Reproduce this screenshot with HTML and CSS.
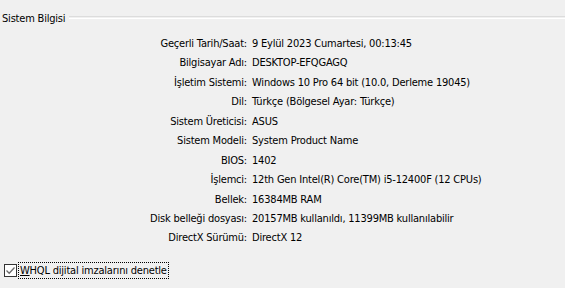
FILE: index.html
```html
<!DOCTYPE html>
<html lang="tr">
<head>
<meta charset="utf-8">
<link rel="stylesheet" href="styles.css">
</head>
<body>
<div class="panel">
  <div class="group-head">
    <span class="group-title">Sistem Bilgisi</span>
    <span class="group-line"></span>
  </div>
  <div class="info">
    <div class="lbl">Geçerli Tarih/Saat:</div><div class="val">9 Eylül 2023 Cumartesi, 00:13:45</div>
    <div class="lbl">Bilgisayar Adı:</div><div class="val">DESKTOP-EFQGAGQ</div>
    <div class="lbl">İşletim Sistemi:</div><div class="val">Windows 10 Pro 64 bit (10.0, Derleme 19045)</div>
    <div class="lbl">Dil:</div><div class="val">Türkçe (Bölgesel Ayar: Türkçe)</div>
    <div class="lbl">Sistem Üreticisi:</div><div class="val">ASUS</div>
    <div class="lbl">Sistem Modeli:</div><div class="val">System Product Name</div>
    <div class="lbl">BIOS:</div><div class="val">1402</div>
    <div class="lbl">İşlemci:</div><div class="val">12th Gen Intel(R) Core(TM) i5-12400F (12 CPUs)</div>
    <div class="lbl">Bellek:</div><div class="val">16384MB RAM</div>
    <div class="lbl">Disk belleği dosyası:</div><div class="val">20157MB kullanıldı, 11399MB kullanılabilir</div>
    <div class="lbl">DirectX Sürümü:</div><div class="val">DirectX 12</div>
  </div>
  <label class="check">
    <span class="box">
      <svg width="11" height="11" viewBox="0 0 11 11"><path d="M1.5 5.5 L4.2 8.2 L9.5 2.5" fill="none" stroke="#6a6a6a" stroke-width="1.3"/></svg>
    </span>
    <span class="check-text"><u>W</u>HQL dijital imzalarını denetle</span>
  </label>
</div>
</body>
</html>
```

FILE: styles.css
```css
html, body {
  margin: 0;
  padding: 0;
  background: #f0f0f0;
}
body {
  width: 565px;
  height: 288px;
  overflow: hidden;
  font-family: "DejaVu Sans Condensed", "DejaVu Sans", sans-serif;
  font-stretch: condensed;
  font-size: 11px;
  letter-spacing: -0.2px;
  color: #000;
}
.panel {
  display: flex;
  flex-direction: column;
}
.group-head {
  display: flex;
  align-items: center;
  height: 20px;
  margin-top: 8px;
  padding-left: 2px;
}
.group-title {
  padding-right: 4px;
}
.group-line {
  flex: 1;
  height: 1px;
  border-top: 1px solid #dcdcdc;
  border-bottom: 1px solid #ffffff;
  margin-top: -2px;
}
.info {
  display: grid;
  grid-template-columns: 247px 1fr;
  grid-auto-rows: 19.44px;
  column-gap: 5px;
  margin-top: 6px;
}
.lbl, .val {
  line-height: 19.44px;
  white-space: nowrap;
}
.lbl {
  text-align: right;
}
.check {
  display: flex;
  align-items: center;
  margin-top: 15px;
  padding-left: 4px;
  gap: 2px;
}
.box {
  width: 11px;
  height: 11px;
  border: 1px solid #333;
  background: #fff;
  display: flex;
}
.check-text {
  outline: 1px dotted #000;
  padding: 0 1px;
  line-height: 15px;
}
.check-text u {
  text-decoration-thickness: 1px;
}
```
